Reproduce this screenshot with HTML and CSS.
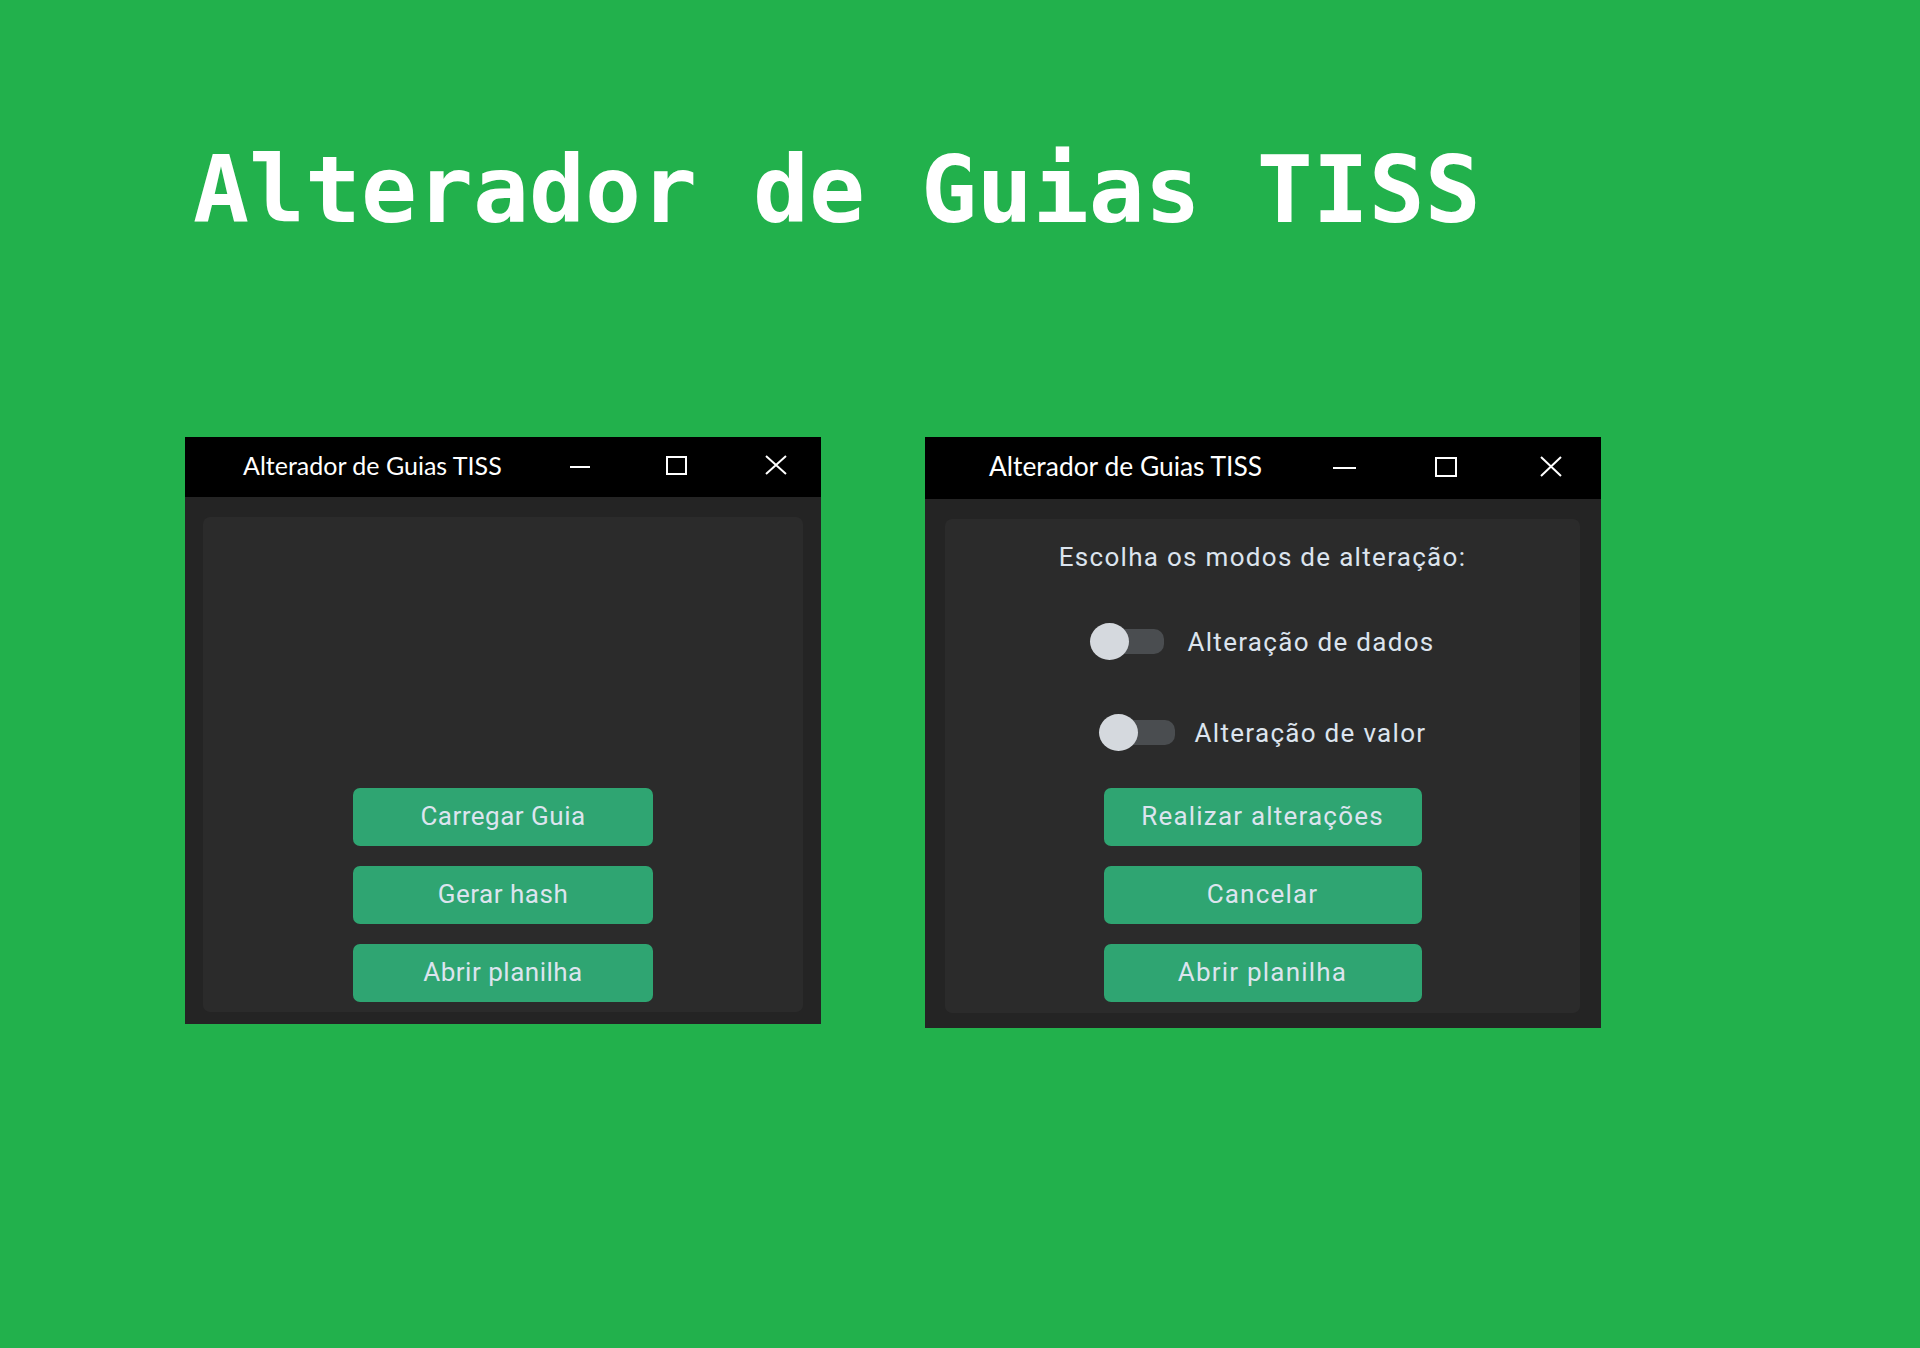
FILE: index.html
```html
<!DOCTYPE html>
<html lang="pt-BR">
<head>
<meta charset="utf-8">
<title>Alterador de Guias TISS</title>
<link rel="stylesheet" href="styles.css">
</head>
<body>
<div class="page">
  <h1 class="hero">Alterador de Guias TISS</h1>
  <div class="windows">
    <div class="win win-a">
      <div class="titlebar">
        <span class="wtitle">Alterador de Guias TISS</span>
        <div class="controls">
          <span class="ctl ctl-min"></span>
          <span class="ctl ctl-max"></span>
          <svg class="ctl ctl-close" viewBox="0 0 22 20"><path d="M1 1 L21 19 M21 1 L1 19" stroke="#fff" stroke-width="2" fill="none"/></svg>
        </div>
      </div>
      <div class="wbody">
        <div class="frame frame-a">
          <button class="btn">Carregar Guia</button>
          <button class="btn">Gerar hash</button>
          <button class="btn">Abrir planilha</button>
        </div>
      </div>
    </div>

    <div class="win win-b">
      <div class="titlebar">
        <span class="wtitle">Alterador de Guias TISS</span>
        <div class="controls">
          <span class="ctl ctl-min"></span>
          <span class="ctl ctl-max"></span>
          <svg class="ctl ctl-close" viewBox="0 0 22 21"><path d="M1 1 L21 20 M21 1 L1 20" stroke="#fff" stroke-width="2" fill="none"/></svg>
        </div>
      </div>
      <div class="wbody">
        <div class="frame frame-b">
          <div class="label">Escolha os modos de alteração:</div>
          <div class="swrow swrow-1">
            <span class="switch"><span class="track"></span><span class="knob"></span></span>
            <span class="swtext">Alteração de dados</span>
          </div>
          <div class="swrow swrow-2">
            <span class="switch"><span class="track"></span><span class="knob"></span></span>
            <span class="swtext">Alteração de valor</span>
          </div>
          <div class="btns">
            <button class="btn">Realizar alterações</button>
            <button class="btn">Cancelar</button>
            <button class="btn">Abrir planilha</button>
          </div>
        </div>
      </div>
    </div>
  </div>
</div>
</body>
</html>
```

FILE: styles.css
```css
html, body {
  margin: 0;
  padding: 0;
  background: #22b14c;
}
body {
  width: 1920px;
  height: 1348px;
  overflow: hidden;
  font-family: Roboto, "Liberation Sans", sans-serif;
}
.page {
  padding-top: 144px;
}
.hero {
  margin: 0 0 0 193px;
  font-family: "DejaVu Sans Mono", monospace;
  font-weight: bold;
  font-size: 93px;
  line-height: 92px;
  height: 92px;
  color: #ffffff;
  white-space: nowrap;
}
.windows {
  display: flex;
  align-items: flex-start;
  gap: 104px;
  margin-top: 201px;
  padding-left: 185px;
}
.win {
  display: flex;
  flex-direction: column;
  background: #242424;
}
.win-a { width: 636px; height: 587px; }
.win-b { width: 676px; height: 591px; }

.titlebar {
  background: #000;
  display: flex;
  align-items: center;
  flex: none;
}
.win-a .titlebar { height: 60px; }
.win-b .titlebar { height: 62px; }

.wtitle {
  font-family: Lato, "Open Sans", sans-serif;
  color: #ffffff;
  white-space: nowrap;
  margin-top: -4px;
}
.win-a .wtitle { font-size: 25px; margin-left: 58px; }
.win-b .wtitle { font-size: 26.4px; margin-left: 64px; }

.controls {
  margin-left: auto;
  display: flex;
  align-items: center;
}
.win-a .controls { margin-right: 34px; margin-top: -4px; }
.win-b .controls { margin-right: 39px; margin-top: -3px; }

.ctl { display: block; flex: none; }
.ctl-min {
  height: 2px;
  background: #fff;
}
.ctl-max {
  box-sizing: border-box;
  border: 2px solid #fff;
}
.win-a .ctl-min { width: 20px; margin-top: 3px; }
.win-a .ctl-max { width: 21px; height: 19px; margin-left: 76px; }
.win-a .ctl-close { width: 22px; height: 20px; margin-left: 78px; }
.win-b .ctl-min { width: 23px; margin-top: 2px; }
.win-b .ctl-max { width: 22px; height: 20px; margin-left: 79px; }
.win-b .ctl-close { width: 22px; height: 21px; margin-left: 83px; }

.wbody {
  flex: 1;
  display: flex;
  flex-direction: column;
}
.win-a .wbody { padding: 20px 18px 12px 18px; }
.win-b .wbody { padding: 20px 21px 15px 20px; }

.frame {
  flex: 1;
  background: #2b2b2b;
  border-radius: 7px;
  display: flex;
  flex-direction: column;
  align-items: center;
}
.frame-a {
  justify-content: flex-end;
  gap: 20px;
  padding-bottom: 10px;
}
.btn {
  display: block;
  border: none;
  margin: 0;
  padding: 0 0 2px 0;
  background: #2fa572;
  color: #dce4ee;
  font-family: Roboto, "Liberation Sans", sans-serif;
  font-size: 26px;
  height: 58px;
  border-radius: 7px;
  text-align: center;
}
.frame-a .btn { width: 300px; letter-spacing: 0.5px; }
.frame-b .btn { width: 318px; letter-spacing: 1.2px; }

.frame-b {
  padding-top: 23px;
  padding-bottom: 11px;
}
.label {
  color: #dce4ee;
  font-size: 26px;
  letter-spacing: 1.3px;
  line-height: 30px;
  height: 30px;
  white-space: nowrap;
}
.swrow {
  display: flex;
  align-items: center;
  height: 37px;
  color: #dce4ee;
  font-size: 26px;
  letter-spacing: 1.3px;
}
.swrow-1 { margin-top: 51px; gap: 23px; }
.swrow-2 { margin-top: 54px; gap: 20px; }
.switch {
  position: relative;
  display: block;
  width: 74px;
  height: 37px;
  flex: none;
}
.swrow-2 .switch { width: 76px; }
.track {
  position: absolute;
  left: 14px;
  right: 0;
  top: 6px;
  height: 25px;
  border-radius: 10px;
  background: #4a4d50;
}
.knob {
  position: absolute;
  left: 0;
  top: 0;
  width: 39px;
  height: 37px;
  border-radius: 50%;
  background: #d5d9de;
}
.swtext { white-space: nowrap; }
.btns {
  margin-top: 37px;
  display: flex;
  flex-direction: column;
  gap: 20px;
}
```
